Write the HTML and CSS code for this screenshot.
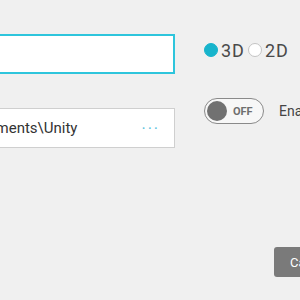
FILE: index.html
```html
<!DOCTYPE html>
<html lang="en">
<head>
  <meta charset="UTF-8">
  <title>New Project</title>
  <link rel="stylesheet" href="styles.css">
</head>
<body>
  <div class="form">
    <div class="col-left">
      <div class="field active"></div>
      <div class="field path">
        <span class="path-text">Documents\Unity</span>
        <span class="browse">&middot;&middot;&middot;</span>
      </div>
    </div>
    <div class="col-right">
      <div class="radios">
        <label class="radio"><span class="dot on"></span>3D</label>
        <label class="radio"><span class="dot"></span>2D</label>
      </div>
      <div class="toggle-row">
        <span class="toggle"><span class="knob"></span><span class="toggle-text">OFF</span></span>
        <span class="toggle-label">Enable Unity Analytics</span>
      </div>
    </div>
  </div>
  <div class="actions">
    <button class="btn">Cancel</button>
    <button class="btn primary">Create project</button>
  </div>
</body>
</html>
```

FILE: styles.css
```css
body { margin:0; background:#f0f0f0; font-family:Roboto,"Liberation Sans",sans-serif; color:#444; overflow:hidden; }
.form { display:flex; gap:29px; margin-left:-52px; padding-top:34px; }
.col-left { width:227px; display:flex; flex-direction:column; gap:34px; flex-shrink:0; }
.field { height:40px; box-sizing:border-box; background:#fff; border:1px solid #cfcfcf; display:flex; align-items:center; padding:0 12px; }
.field.active { border:2px solid #2ec5dc; }
.path-text { flex:1; font-size:15px; color:#333; white-space:nowrap; }
.browse { color:#5bc3de; font-size:16px; letter-spacing:2px; margin-right:2px; }
.col-right { display:flex; flex-direction:column; padding-top:6px; flex-shrink:0; }
.radios { display:flex; height:20px; align-items:center; }
.radio { display:flex; align-items:center; font-size:18px; letter-spacing:1px; color:#4a4a4a; margin-right:3px; }
.dot { width:14px; height:14px; border-radius:50%; box-sizing:border-box; border:1px solid #c4c4c4; background:#fff; margin-right:3px; }
.dot.on { background:#17b4cc; border-color:#17b4cc; }
.toggle-row { display:flex; align-items:center; margin-top:38px; gap:15px; }
.toggle { width:60px; height:26px; box-sizing:border-box; border:1.5px solid #8a8a8a; border-radius:13px; display:flex; align-items:center; padding-left:2px; background:#f7f7f7; }
.knob { width:20px; height:20px; border-radius:50%; background:#717171; }
.toggle-text { font-size:11px; font-weight:bold; color:#6f6f6f; margin-left:6px; }
.toggle-label { font-size:14px; color:#444; white-space:nowrap; }
.actions { display:flex; gap:10px; padding-left:274px; margin-top:99px; }
.btn { height:30px; border:none; border-radius:3px; background:#7a7a7a; color:#fff; font-family:inherit; font-size:13px; padding:0 16px; white-space:nowrap; }
.btn.primary { background:#17b4cc; }
```
